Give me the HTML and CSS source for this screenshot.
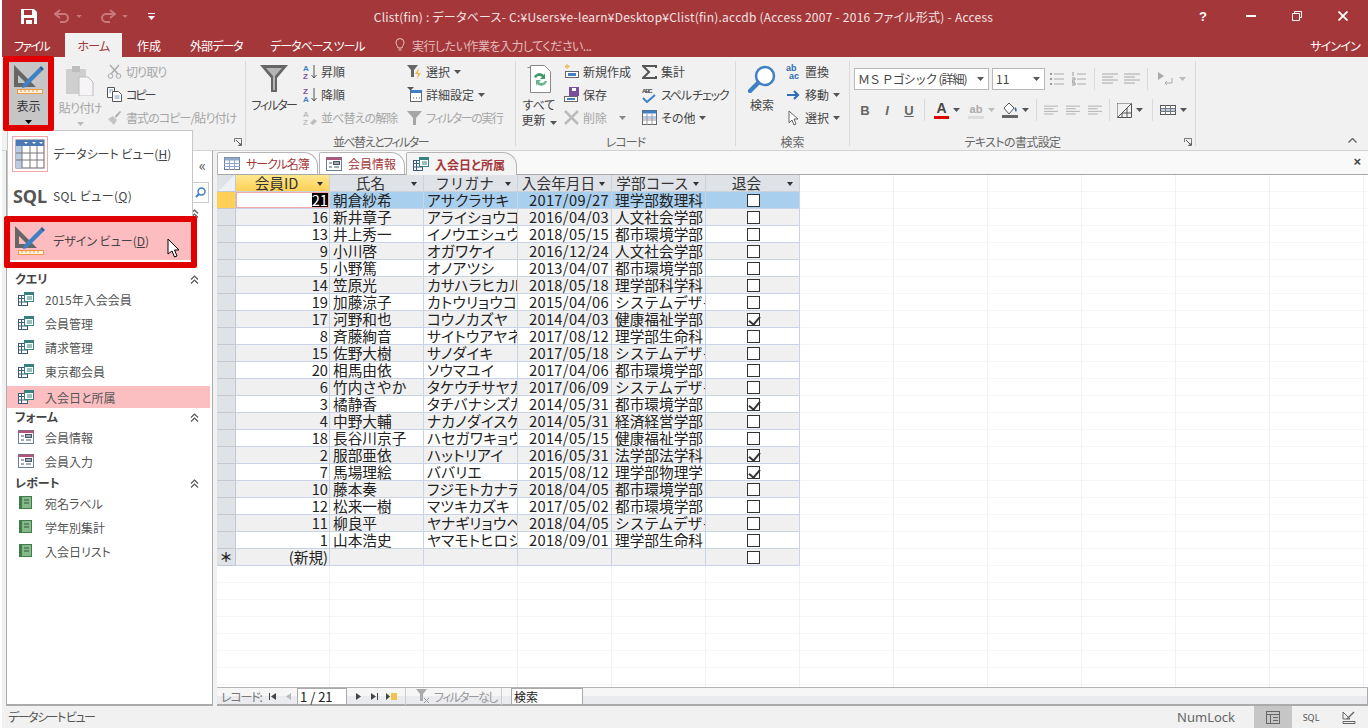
FILE: index.html
```html
<!DOCTYPE html>
<html lang="ja">
<head>
    <meta charset="UTF-8">
    <meta name="viewport" content="width=device-width, initial-scale=1.0">
    <title>Clist(fin) - Access</title>
    <link rel="stylesheet" href="styles.css">
</head>
<body>
    <svg class="defs" width="0" height="0">
        <symbol id="i-design" viewBox="0 0 30 30">
            <path d="M0 1 L0 23 L22 23 Z M4 11 L4 19 L12 19 Z" fill="#666" fill-rule="evenodd"/>
            <path d="M9 20 L25 4 L28 7 L12 23 L8 24 Z" fill="#3f7fc4"/>
            <path d="M25 4 L27 2 L30 5 L28 7 Z" fill="#2c5f9a"/>
            <rect x="3.5" y="25.5" width="25" height="4" fill="#fff3e0" stroke="#ed9a45"/>
            <path d="M7 26v2M11 26v2M15 26v2M19 26v2M23 26v2" stroke="#ed9a45"/>
        </symbol>
        <symbol id="i-sheet" viewBox="0 0 30 30">
            <rect x="1" y="1" width="28" height="28" fill="#fff" stroke="#666"/>
            <rect x="1" y="1" width="28" height="6" fill="#4a79b5"/>
            <rect x="1" y="7" width="6" height="22" fill="#b8cbe4"/>
            <path d="M1 14h28M1 21h28M7 7v22M15 7v22M22 7v22" stroke="#777" fill="none"/>
            <path d="M9 3h4l-2 2zM17 3h4l-2 2zM24 3h4l-2 2z" fill="#fff"/>
        </symbol>
        <symbol id="i-query" viewBox="0 0 16 14">
            <rect x="0.5" y="3.5" width="9" height="10" fill="#fff" stroke="#3c5a78"/>
            <path d="M0 6.5h10M0 10h10M3.5 4v9" stroke="#3c5a78"/>
            <rect x="6.5" y="0.5" width="9" height="9" fill="#fff" stroke="#37827f"/>
            <rect x="6.5" y="0.5" width="9" height="2.5" fill="#37827f"/>
            <path d="M9 5h5M9 7h5" stroke="#37827f"/>
        </symbol>
        <symbol id="i-form" viewBox="0 0 16 14">
            <rect x="0.5" y="0.5" width="15" height="13" fill="#fff" stroke="#6b7c93"/>
            <rect x="0.5" y="0.5" width="15" height="2.5" fill="#b2537a"/>
            <path d="M3 6h3M3 10h3M8 6h5M8 10h5" stroke="#44546a"/>
            <rect x="7.5" y="4.5" width="6" height="3" fill="none" stroke="#44546a"/>
        </symbol>
        <symbol id="i-report" viewBox="0 0 14 14">
            <rect x="0" y="0" width="13" height="13" fill="#3f7f47"/>
            <rect x="3" y="1" width="9" height="11" fill="#86b98a"/>
            <path d="M5 4h5M5 7h5" stroke="#2d5f33"/>
        </symbol>
        <symbol id="i-caret" viewBox="0 0 7 4"><path d="M0 0h7L3.5 4z"/></symbol>
        <symbol id="i-chev" viewBox="0 0 9 9"><path d="M1 4.500l3.500-3.500 3.500 3.500M1 8.500l3.500-3.500 3.500 3.500" fill="none" stroke="#555" stroke-width="1.200"/></symbol>
        <symbol id="i-lines" viewBox="0 0 16 12">
            <path d="M0 1h16M0 4h11M0 7h16M0 10h11" stroke="#a8a8a8" fill="none"/>
        </symbol>
    </svg>

    <div class="app">
        <header class="titlebar">
            <div class="qat">
                <svg class="qat-save" width="16" height="15" viewBox="0 0 16 15"><path d="M0 0h13l3 3v12H0z" fill="#fff"/><rect x="3" y="1" width="8" height="5" fill="#a4373a"/><rect x="3" y="9" width="10" height="6" fill="#a4373a"/><rect x="5" y="11" width="6" height="4" fill="#fff"/></svg>
                <svg class="qat-undo" width="16" height="14" viewBox="0 0 16 14"><path d="M6 1L1 5l5 4M1 5h9a4 4 0 0 1 0 8H6" fill="none" stroke="#c9797b" stroke-width="2"/></svg>
                <svg class="qat-caret" width="6" height="3"><use href="#i-caret" fill="#c9797b"/></svg>
                <svg class="qat-redo" width="16" height="14" viewBox="0 0 16 14"><path d="M10 1l5 4-5 4M15 5H6a4 4 0 0 0 0 8h4" fill="none" stroke="#c9797b" stroke-width="2"/></svg>
                <svg class="qat-caret" width="6" height="3"><use href="#i-caret" fill="#c9797b"/></svg>
                <svg class="qat-more" width="7" height="7" viewBox="0 0 7 7"><path d="M0 0.5h7" stroke="#fff"/><path d="M0 3h7L3.5 7z" fill="#fff"/></svg>
            </div>
            <div class="doc-title">Clist(fin) : データベース- C:¥Users¥e-learn¥Desktop¥Clist(fin).accdb (Access 2007 - 2016 ファイル形式) - Access</div>
            <div class="win-btns">
                <span class="win-help">?</span>
                <svg class="win-min" width="10" height="2"><rect width="10" height="2" fill="#fff"/></svg>
                <svg class="win-max" width="10" height="10" viewBox="0 0 10 10"><path d="M2.5 2.5V.5h7v6h-2M.5 2.5h7v7h-7z" fill="none" stroke="#fff"/></svg>
                <svg class="win-close" width="10" height="10" viewBox="0 0 10 10"><path d="M.5.5l9 9M9.500.5l-9 9" stroke="#fff" stroke-width="1.800"/></svg>
            </div>
        </header>

        <nav class="tabbar">
            <span class="rtab file">ファイル</span>
            <span class="rtab home">ホーム</span>
            <span class="rtab create">作成</span>
            <span class="rtab ext">外部データ</span>
            <span class="rtab dbtool">データベース ツール</span>
            <span class="tell">
                <svg width="10" height="14" viewBox="0 0 10 14"><path d="M3 10C3 8 1 7 1 4.500a4 4 0 0 1 8 0C9 7 7 8 7 10zM3.500 12h3" fill="none" stroke="#e6c3c4"/></svg>
                実行したい作業を入力してください...
            </span>
            <span class="signin">サインイン</span>
        </nav>

        <section class="ribbon">
            <div class="group g-view">
                <div class="group-body">
                    <div class="big view-btn">
                        <svg width="30" height="30"><use href="#i-design"/></svg>
                        <span class="big-text">表示</span>
                        <svg class="big-caret" width="7" height="4"><use href="#i-caret"/></svg>
                    </div>
                </div>
            </div>

            <div class="group g-clip">
                <div class="group-body">
                    <div class="big off paste">
                        <svg width="30" height="31" viewBox="0 0 30 31"><rect x="1" y="4" width="20" height="25" rx="1" fill="#cfcfcf"/><rect x="7" y="1" width="8" height="6" fill="#bdbdbd"/><path d="M14 12h9l5 5v14H14z" fill="#f7f4f7" stroke="#bdbdbd"/></svg>
                        <span class="big-text">貼り付け</span>
                        <svg class="big-caret" width="7" height="4"><use href="#i-caret" fill="#bbb"/></svg>
                    </div>
                    <div class="col">
                        <div class="cmd off tight-1"><svg width="15" height="15" viewBox="0 0 15 15"><path d="M3 1l8 9M12 1L4 10" stroke="#aaa" stroke-width="1.500"/><circle cx="3.500" cy="12" r="2.300" fill="none" stroke="#aaa"/><circle cx="11.500" cy="12" r="2.300" fill="none" stroke="#aaa"/></svg>切り取り</div>
                        <div class="cmd tight-2"><svg width="15" height="15" viewBox="0 0 15 15"><path d="M.5.5h7v10h-7z" fill="#fff" stroke="#555"/><path d="M5.500 4.500h6l3 3v7h-9z" fill="#fff" stroke="#555"/><path d="M2 3h4M2 5h2M7.500 9h5M7.500 11h5" stroke="#7a9cc6"/></svg>コピー</div>
                        <div class="cmd off tight-1"><svg width="15" height="15" viewBox="0 0 15 15"><path d="M1 9l5-3 4 4-3 5z" fill="#c4c4c4"/><path d="M8 6l5-5 1 1-5 6z" fill="#aaa"/></svg>書式のコピー/貼り付け</div>
                    </div>
                </div>
                <div class="group-label"><svg class="launcher" width="8" height="8" viewBox="0 0 8 8"><path d="M.5 4V.5H7.500V7.500H4" fill="none" stroke="#777"/><path d="M2 2l5 5M5 7h2V5" fill="none" stroke="#555"/></svg></div>
            </div>

            <div class="group g-sort">
                <div class="group-body">
                    <div class="big filter">
                        <svg width="28" height="28" viewBox="0 0 28 28"><path d="M0 0h28L17 13v14h-6V13z" fill="#666"/><path d="M6 3h16l-7 8v14h-2V11z" fill="#b5b5b5"/></svg>
                        <span class="big-text tight-15">フィルター</span>
                    </div>
                    <div class="col col-sort">
                        <div class="cmd"><svg class="az" width="14" height="16" viewBox="0 0 14 16"><text x="0" y="7" class="az-a">A</text><text x="0" y="15" class="az-z">Z</text><path d="M11 1v13M8.500 11l2.500 3 2.500-3" fill="none" stroke="#555"/></svg>昇順</div>
                        <div class="cmd"><svg class="az" width="14" height="16" viewBox="0 0 14 16"><text x="0" y="7" class="az-z">Z</text><text x="0" y="15" class="az-a">A</text><path d="M11 1v13M8.500 11l2.500 3 2.500-3" fill="none" stroke="#555"/></svg>降順</div>
                        <div class="cmd off tight-1"><svg class="az" width="14" height="16" viewBox="0 0 14 16"><text x="0" y="7" class="az-off">A</text><text x="0" y="15" class="az-off">Z</text><path d="M7 13l4-4 3 2-4 4z" fill="#bbb"/></svg>並べ替えの解除</div>
                    </div>
                    <div class="col col-filter">
                        <div class="cmd"><svg width="15" height="15" viewBox="0 0 15 15"><path d="M0 1h11L7 6v7H4V6z" fill="#666"/><path d="M12 4L8 10h3l-1 5 4-6h-3z" fill="#f2b84b"/></svg>選択<svg class="caret" width="7" height="4"><use href="#i-caret"/></svg></div>
                        <div class="cmd"><svg width="15" height="15" viewBox="0 0 15 15"><path d="M0 0h7L4 3v4H3V3z" fill="#555"/><rect x="3.500" y="3.500" width="11" height="11" fill="#fff" stroke="#666"/><rect x="3.500" y="3" width="11" height="3" fill="#3f7fc4"/><path d="M6 11h1M9 11h1M12 11h1" stroke="#555"/></svg>詳細設定<svg class="caret" width="7" height="4"><use href="#i-caret"/></svg></div>
                        <div class="cmd off tight-15"><svg width="15" height="15" viewBox="0 0 15 15"><path d="M0 1h15L9 8v7H6V8z" fill="#a6a6a6"/></svg>フィルターの実行</div>
                    </div>
                </div>
                <div class="group-label tight-15">並べ替えとフィルター</div>
            </div>

            <div class="group g-rec">
                <div class="group-body">
                    <div class="big refresh">
                        <svg width="26" height="30" viewBox="0 0 26 30"><path d="M1.500 3.500h3" stroke="#888"/><path d="M4.500 1.500h14l6 6v21h-20z" fill="#fff" stroke="#888"/><path d="M8 13a6 6 0 0 1 10-2l1-2v6h-5l2-2a4 4 0 0 0-6 1z" fill="#3f9a6a"/><path d="M21 17a6 6 0 0 1-10 3l-1 2v-6h5l-2 2a4 4 0 0 0 6-1z" fill="#6ab58e"/></svg>
                        <span class="big-text">すべて<br>更新<svg class="caret" width="7" height="4"><use href="#i-caret"/></svg></span>
                    </div>
                    <div class="col col-rec1">
                        <div class="cmd"><svg width="15" height="15" viewBox="0 0 15 15"><path d="M3 0v5M1 2.500h5M1.500 1l3 3M4.500 1l-3 3" stroke="#efb75a"/><rect x="1.500" y="7.500" width="13" height="6" fill="#fff" stroke="#666"/><rect x="4" y="9" width="8" height="3" fill="#3f7fc4"/></svg>新規作成</div>
                        <div class="cmd"><svg width="15" height="15" viewBox="0 0 15 15"><path d="M5 0h10v9H5z" fill="#7a4f9f"/><rect x="8" y="1" width="4" height="3" fill="#fff"/><rect x=".5" y="9.500" width="13" height="5" fill="#fff" stroke="#666"/><rect x="3" y="11" width="8" height="2" fill="#3f7fc4"/></svg>保存</div>
                        <div class="cmd off"><svg width="15" height="15" viewBox="0 0 15 15"><path d="M1 1l13 13M14 1L1 14" stroke="#bbb" stroke-width="2.500"/></svg>削除<svg class="caret gap" width="7" height="4"><use href="#i-caret" fill="#888"/></svg></div>
                    </div>
                    <div class="col col-rec2">
                        <div class="cmd"><svg width="15" height="14" viewBox="0 0 15 14"><path d="M14 3V1H1l6 6-6 6h13v-2" fill="none" stroke="#555" stroke-width="2"/></svg>集計</div>
                        <div class="cmd tight-spell"><svg width="15" height="16" viewBox="0 0 15 16"><text x="0" y="6" class="abc">ABC</text><path d="M1 11l4 4 8-7" fill="none" stroke="#3f7fc4" stroke-width="2"/></svg>スペル チェック</div>
                        <div class="cmd"><svg width="15" height="15" viewBox="0 0 15 15"><rect x=".5" y=".5" width="14" height="14" fill="#fff" stroke="#666"/><rect x=".5" y=".5" width="14" height="3" fill="#3f7fc4"/><rect x="1" y="6" width="13" height="3" fill="#b8cbe4"/><path d="M.5 10h14M5 4v11M10 4v11" stroke="#999" fill="none"/></svg>その他<svg class="caret" width="7" height="4"><use href="#i-caret"/></svg></div>
                    </div>
                </div>
                <div class="group-label tight-1">レコード</div>
            </div>

            <div class="group g-find">
                <div class="group-body">
                    <div class="big find">
                        <svg width="28" height="28" viewBox="0 0 28 28"><circle cx="17" cy="11" r="9" fill="#fff" stroke="#3f7fc4" stroke-width="2.500"/><path d="M10 18L2 26" stroke="#3f7fc4" stroke-width="4.500" stroke-linecap="round"/></svg>
                        <span class="big-text">検索</span>
                    </div>
                    <div class="col col-find">
                        <div class="cmd"><svg width="15" height="16" viewBox="0 0 15 16"><text x="0" y="7" class="ab">ab</text><text x="3" y="15" class="ab">ac</text></svg>置換</div>
                        <div class="cmd"><svg width="15" height="12" viewBox="0 0 15 12"><path d="M1 6h11M8 2l4 4-4 4" fill="none" stroke="#2f6fb5" stroke-width="2.200"/></svg>移動<svg class="caret" width="7" height="4"><use href="#i-caret"/></svg></div>
                        <div class="cmd"><svg width="15" height="16" viewBox="0 0 15 16"><path d="M3 1v12l3-3 2 5 2-1-2-5h4z" fill="#fff" stroke="#666"/></svg>選択<svg class="caret" width="7" height="4"><use href="#i-caret"/></svg></div>
                    </div>
                </div>
                <div class="group-label">検索</div>
            </div>

            <div class="group g-text">
                <div class="group-body text-body">
                    <div class="text-row">
                        <div class="combo font-combo"><span class="font-name">ＭＳ Ｐゴシック (詳細)</span><svg class="caret" width="7" height="4"><use href="#i-caret"/></svg></div>
                        <div class="combo size-combo">11<svg class="caret" width="7" height="4"><use href="#i-caret"/></svg></div>
                        <svg class="t-ico list1" width="14" height="14" viewBox="0 0 14 14"><path d="M4 2h10M4 7h10M4 12h10" stroke="#aaa"/><path d="M0 2h2M0 7h2M0 12h2" stroke="#999" stroke-width="2"/></svg>
                        <svg class="t-ico list2" width="14" height="14" viewBox="0 0 14 14"><path d="M5 2h9M5 7h9M5 12h9" stroke="#aaa"/><path d="M1 0v4M0 6h3v2H0v2h3M0 11h3v2H0" stroke="#999" fill="none"/></svg>
                        <i class="sep sep1"></i>
                        <svg class="t-ico ind1" width="16" height="12"><use href="#i-lines"/></svg>
                        <svg class="t-ico ind2" width="16" height="12"><use href="#i-lines"/></svg>
                        <i class="sep sep2"></i>
                        <svg class="t-ico rtl" width="15" height="14" viewBox="0 0 15 14"><path d="M0 0l6 4-6 4z" fill="#aaa"/><path d="M14 6v5H7M9 9l-2 2 2 2" fill="none" stroke="#aaa"/></svg>
                        <svg class="caret rtl-caret" width="7" height="4"><use href="#i-caret" fill="#bbb"/></svg>
                    </div>
                    <div class="text-row row2">
                        <b class="fmt">B</b><i class="fmt">I</i><u class="fmt">U</u>
                        <i class="sep sep3"></i>
                        <span class="font-color">A</span><svg class="caret" width="7" height="4"><use href="#i-caret"/></svg>
                        <span class="hilite">ab</span><svg class="caret" width="7" height="4"><use href="#i-caret" fill="#bbb"/></svg>
                        <svg class="t-ico fill-ico" width="16" height="16" viewBox="0 0 16 16"><path d="M2 6l5-5 5 5-5 6z" fill="#fff" stroke="#555"/><path d="M13 5c2 1 2 4 1 5-1-1-2-3-1-5z" fill="#2f6fb5"/><rect y="13" width="16" height="3" fill="#666"/></svg><svg class="caret" width="7" height="4"><use href="#i-caret"/></svg>
                        <i class="sep sep4"></i>
                        <svg class="t-ico al1" width="14" height="11"><use href="#i-lines"/></svg>
                        <svg class="t-ico al2" width="14" height="11"><use href="#i-lines"/></svg>
                        <svg class="t-ico al3" width="14" height="11"><use href="#i-lines"/></svg>
                        <i class="sep sep5"></i>
                        <svg class="t-ico grid-ico" width="15" height="15" viewBox="0 0 15 15"><path d="M.5.5h14" stroke="#555" stroke-dasharray="1 1"/><path d="M.5.5v14" stroke="#555" stroke-dasharray="1 1"/><path d="M.5 14.500L14.500.500V14.500zM5 10v5M10 5v10M5 10h10" fill="none" stroke="#555"/></svg><svg class="caret" width="7" height="4"><use href="#i-caret"/></svg>
                        <i class="sep sep6"></i>
                        <svg class="t-ico tbl-ico" width="16" height="10" viewBox="0 0 16 10"><rect x=".5" y=".5" width="15" height="9" fill="#fff" stroke="#555"/><rect x="1" y="4" width="14" height="2" fill="#b8cbe4"/><path d="M5.500 0v10M10.500 0v10M0 3.500h16M0 6.500h16" stroke="#777"/></svg><svg class="caret" width="7" height="4"><use href="#i-caret"/></svg>
                    </div>
                </div>
                <div class="group-label text-label">テキストの書式設定<svg class="launcher" width="8" height="8" viewBox="0 0 8 8"><path d="M.5 4V.5H7.500V7.500H4" fill="none" stroke="#777"/><path d="M2 2l5 5M5 7h2V5" fill="none" stroke="#555"/></svg></div>
            </div>

            <svg class="collapse" width="9" height="5" viewBox="0 0 9 5"><path d="M.5 4.500l4-4 4 4" fill="none" stroke="#666" stroke-width="1.400"/></svg>
        </section>

        <main class="workspace">
            <aside class="nav-pane">
                <div class="nav-head"><span class="shutter">«</span></div>
                <div class="nav-search">
                    <svg width="11" height="11" viewBox="0 0 11 11"><circle cx="6.500" cy="4.500" r="3.500" fill="none" stroke="#3f7fc4" stroke-width="1.500"/><path d="M4 7L1 10" stroke="#3f7fc4" stroke-width="2"/></svg>
                </div>
                <div class="nav-heading nav-hidden"><span>テーブル</span><svg width="9" height="9"><use href="#i-chev"/></svg></div>
                <div class="nav-heading"><span>クエリ</span><svg width="9" height="9"><use href="#i-chev"/></svg></div>
                <div class="nav-item"><svg width="16" height="14"><use href="#i-query"/></svg>2015年入会会員</div>
                <div class="nav-item"><svg width="16" height="14"><use href="#i-query"/></svg>会員管理</div>
                <div class="nav-item"><svg width="16" height="14"><use href="#i-query"/></svg>請求管理</div>
                <div class="nav-item"><svg width="16" height="14"><use href="#i-query"/></svg>東京都会員</div>
                <div class="nav-item current"><svg width="16" height="14"><use href="#i-query"/></svg>入会日と所属</div>
                <div class="nav-heading"><span>フォーム</span><svg width="9" height="9"><use href="#i-chev"/></svg></div>
                <div class="nav-item"><svg width="16" height="14"><use href="#i-form"/></svg>会員情報</div>
                <div class="nav-item"><svg width="16" height="14"><use href="#i-form"/></svg>会員入力</div>
                <div class="nav-heading"><span>レポート</span><svg width="9" height="9"><use href="#i-chev"/></svg></div>
                <div class="nav-item"><svg width="16" height="14"><use href="#i-report"/></svg>宛名ラベル</div>
                <div class="nav-item"><svg width="16" height="14"><use href="#i-report"/></svg>学年別集計</div>
                <div class="nav-item"><svg width="16" height="14"><use href="#i-report"/></svg>入会日リスト</div>
            </aside>

            <div class="doc">
                <div class="doc-tabs">
                    <span class="dtab"><svg width="16" height="13" viewBox="0 0 16 13"><rect x=".5" y=".5" width="15" height="12" fill="#fff" stroke="#6b7c93"/><rect x=".5" y=".5" width="15" height="3" fill="#8fa7c8"/><path d="M0 6.500h16M0 9.500h16M5.500 3v10M10.500 3v10" stroke="#8fa7c8"/></svg>サークル名簿</span>
                    <span class="dtab"><svg width="16" height="14"><use href="#i-form"/></svg>会員情報</span>
                    <span class="dtab active"><svg width="16" height="14"><use href="#i-query"/></svg>入会日と所属</span>
                    <span class="doc-close">×</span>
                </div>
                <div class="sheet">
                    <table class="grid">
                        <thead>
                            <tr><th class="sel corner"></th><th class="cur">会員ID<i class="drop"></i></th><th>氏名<i class="drop"></i></th><th>フリガナ<i class="drop"></i></th><th>入会年月日<i class="drop"></i></th><th>学部コース<i class="drop"></i></th><th>退会<i class="drop"></i></th></tr>
                        </thead>
                        <tbody>
                            <tr class="picked"><td class="sel hot"></td><td class="num focus"><span class="inv">21</span></td><td>朝倉紗希</td><td class="kana">アサクラサキ</td><td class="date">2017/09/27</td><td>理学部数理科</td><td class="chk"><span class="box"></span></td></tr>
                            <tr><td class="sel"></td><td class="num">16</td><td>新井章子</td><td class="kana">アライショウコ</td><td class="date">2016/04/03</td><td>人文社会学部</td><td class="chk"><span class="box"></span></td></tr>
                            <tr><td class="sel"></td><td class="num">13</td><td>井上秀一</td><td class="kana">イノウエシュウ</td><td class="date">2018/05/15</td><td>都市環境学部</td><td class="chk"><span class="box"></span></td></tr>
                            <tr><td class="sel"></td><td class="num">9</td><td>小川啓</td><td class="kana">オガワケイ</td><td class="date">2016/12/24</td><td>人文社会学部</td><td class="chk"><span class="box"></span></td></tr>
                            <tr><td class="sel"></td><td class="num">5</td><td>小野篤</td><td class="kana">オノアツシ</td><td class="date">2013/04/07</td><td>都市環境学部</td><td class="chk"><span class="box"></span></td></tr>
                            <tr><td class="sel"></td><td class="num">14</td><td>笠原光</td><td class="kana">カサハラヒカル</td><td class="date">2018/05/18</td><td>理学部科学科</td><td class="chk"><span class="box"></span></td></tr>
                            <tr><td class="sel"></td><td class="num">19</td><td>加藤涼子</td><td class="kana">カトウリョウコ</td><td class="date">2015/04/06</td><td>システムデザイン</td><td class="chk"><span class="box"></span></td></tr>
                            <tr><td class="sel"></td><td class="num">17</td><td>河野和也</td><td class="kana">コウノカズヤ</td><td class="date">2014/04/03</td><td>健康福祉学部</td><td class="chk"><span class="box on"></span></td></tr>
                            <tr><td class="sel"></td><td class="num">8</td><td>斉藤絢音</td><td class="kana">サイトウアヤネ</td><td class="date">2017/08/12</td><td>理学部生命科</td><td class="chk"><span class="box"></span></td></tr>
                            <tr><td class="sel"></td><td class="num">15</td><td>佐野大樹</td><td class="kana">サノダイキ</td><td class="date">2017/05/18</td><td>システムデザイン</td><td class="chk"><span class="box"></span></td></tr>
                            <tr><td class="sel"></td><td class="num">20</td><td>相馬由依</td><td class="kana">ソウマユイ</td><td class="date">2017/04/06</td><td>都市環境学部</td><td class="chk"><span class="box"></span></td></tr>
                            <tr><td class="sel"></td><td class="num">6</td><td>竹内さやか</td><td class="kana">タケウチサヤカ</td><td class="date">2017/06/09</td><td>システムデザイン</td><td class="chk"><span class="box"></span></td></tr>
                            <tr><td class="sel"></td><td class="num">3</td><td>橘静香</td><td class="kana">タチバナシズカ</td><td class="date">2014/05/31</td><td>都市環境学部</td><td class="chk"><span class="box on"></span></td></tr>
                            <tr><td class="sel"></td><td class="num">4</td><td>中野大輔</td><td class="kana">ナカノダイスケ</td><td class="date">2014/05/31</td><td>経済経営学部</td><td class="chk"><span class="box"></span></td></tr>
                            <tr><td class="sel"></td><td class="num">18</td><td>長谷川京子</td><td class="kana">ハセガワキョウ</td><td class="date">2014/05/15</td><td>健康福祉学部</td><td class="chk"><span class="box"></span></td></tr>
                            <tr><td class="sel"></td><td class="num">2</td><td>服部亜依</td><td class="kana">ハットリアイ</td><td class="date">2016/05/31</td><td>法学部法学科</td><td class="chk"><span class="box on"></span></td></tr>
                            <tr><td class="sel"></td><td class="num">7</td><td>馬場理絵</td><td class="kana">ババリエ</td><td class="date">2015/08/12</td><td>理学部物理学</td><td class="chk"><span class="box on"></span></td></tr>
                            <tr><td class="sel"></td><td class="num">10</td><td>藤本奏</td><td class="kana">フジモトカナデ</td><td class="date">2018/04/05</td><td>都市環境学部</td><td class="chk"><span class="box"></span></td></tr>
                            <tr><td class="sel"></td><td class="num">12</td><td>松来一樹</td><td class="kana">マツキカズキ</td><td class="date">2017/05/02</td><td>都市環境学部</td><td class="chk"><span class="box"></span></td></tr>
                            <tr><td class="sel"></td><td class="num">11</td><td>柳良平</td><td class="kana">ヤナギリョウヘイ</td><td class="date">2018/04/05</td><td>システムデザイン</td><td class="chk"><span class="box"></span></td></tr>
                            <tr><td class="sel"></td><td class="num">1</td><td>山本浩史</td><td class="kana">ヤマモトヒロシ</td><td class="date">2018/09/01</td><td>理学部生命科</td><td class="chk"><span class="box"></span></td></tr>
                            <tr class="new"><td class="sel">＊</td><td class="num">(新規)</td><td></td><td></td><td></td><td></td><td class="chk"><span class="box"></span></td></tr>
                        </tbody>
                    </table>
                </div>
                <div class="rec-bar">
                    <span class="rec-label">レコード:</span>
                    <svg class="rec-ico first" width="7" height="7" viewBox="0 0 7 7"><path d="M0 0h1v7H0zM7 0v7L2 3.500z" fill="#444"/></svg>
                    <svg class="rec-ico prev" width="5" height="7" viewBox="0 0 5 7"><path d="M5 0v7L0 3.500z" fill="#bbb"/></svg>
                    <span class="rec-pos">1 / 21</span>
                    <svg class="rec-ico nxt" width="5" height="7" viewBox="0 0 5 7"><path d="M0 0v7l5-3.500z" fill="#444"/></svg>
                    <svg class="rec-ico" width="7" height="7" viewBox="0 0 7 7"><path d="M6 0h1v7H6zM0 0v7l5-3.500z" fill="#444"/></svg>
                    <svg class="rec-ico" width="11" height="7" viewBox="0 0 11 7"><path d="M0 0v7l4-3.500z" fill="#444"/><rect x="5" width="6" height="7" fill="#f2c14e"/></svg>
                    <span class="rec-filter"><svg width="15" height="14" viewBox="0 0 15 14"><path d="M0 0h11L7 5v7H4V5z" fill="#aaa"/><path d="M8 9l5 5M13 9l-5 5" stroke="#999"/></svg>フィルターなし</span>
                    <span class="rec-search">検索</span>
                    <span class="rec-fill"></span>
                </div>
            </div>
        </main>

        <footer class="status">
            <span class="status-text">データシート ビュー</span>
            <span class="numlock">NumLock</span>
            <span class="vbtn on"><svg width="14" height="13" viewBox="0 0 14 13"><rect x=".5" y=".5" width="13" height="12" fill="none" stroke="#666"/><path d="M0 3.500h14M4.500 3v10M7 6.500h5M7 9.500h5" stroke="#666"/></svg></span>
            <span class="vbtn sql">SQL</span>
            <span class="vbtn"><svg width="14" height="13" viewBox="0 0 14 13"><path d="M1 1v7h7zM1 10.500h12v2H1z" fill="none" stroke="#666"/><path d="M5 8l7-7" stroke="#666" stroke-width="1.500"/></svg></span>
        </footer>
    </div>

    <!-- ドロップダウン -->
    <div class="view-menu">
        <div class="vm-item">
            <span class="vm-icon picked-icon"><svg width="30" height="30"><use href="#i-sheet"/></svg></span>
            <span>データシート ビュー(<u>H</u>)</span>
        </div>
        <div class="vm-item">
            <span class="vm-icon sql-big">SQL</span>
            <span class="vm-sql">SQL ビュー(<u>Q</u>)</span>
        </div>
        <div class="vm-item hover">
            <span class="vm-icon"><svg width="30" height="30"><use href="#i-design"/></svg></span>
            <span>デザイン ビュー(<u>D</u>)</span>
        </div>
    </div>

    <!-- 赤枠の注釈 -->
    <div class="mark mark-view"></div>
    <div class="mark mark-design"></div>
    <svg class="pointer" width="13" height="20" viewBox="0 0 13 20"><path d="M1 1v15l4-3 2.500 6 2.500-1-2.500-6H12z" fill="#fff" stroke="#000"/></svg>
</body>
</html>
```

FILE: styles.css
```css
* {
    box-sizing: border-box;
}
html, body {
    margin: 0;
    height: 728px;
    overflow: hidden;
    background: #fff;
}
body {
    position: relative;
    font-family: "Noto Sans CJK JP", "Noto Sans", sans-serif;
    font-size: 12px;
    font-feature-settings: "palt";
    color: #444;
}
.defs {
    position: absolute;
}
.app {
    margin-left: 2px;
    height: 728px;
    display: flex;
    flex-direction: column;
    background: #f1f1f1;
}
.tight-1 { letter-spacing: -0.9px; }
.tight-2 { letter-spacing: -2px; }
.tight-15 { letter-spacing: -1.5px; }
.tight-spell { letter-spacing: -1.2px; }

/* title bar */
.titlebar {
    height: 32px;
    background: #a4373a;
    color: #f3e3e3;
    display: grid;
    grid-template-columns: 1fr auto 1fr;
    align-items: center;
    padding-right: 3px;
}
.qat {
    display: flex;
    align-items: center;
}
.qat-save { margin-left: 19px; }
.qat-undo { margin-left: 17px; }
.qat-caret { margin-left: 6px; }
.qat-redo { margin-left: 18px; }
.qat-more { margin-left: 20px; }
.doc-title {
    font-size: 12px;
    letter-spacing: 0.24px;
    white-space: nowrap;
}
.win-btns {
    display: flex;
    align-items: center;
    justify-content: flex-end;
    color: #fff;
}
.win-help {
    font-family: "Liberation Sans", sans-serif;
    font-weight: bold;
    font-size: 13px;
    margin-right: 39px;
}
.win-min { margin-right: 36px; }
.win-max { margin-right: 36px; }
.win-close { margin-right: 17px; }

/* ribbon tabs */
.tabbar {
    height: 25px;
    background: #a4373a;
    color: #fff;
    display: flex;
    align-items: flex-end;
    white-space: nowrap;
}
.rtab {
    height: 24px;
    line-height: 25px;
    padding: 0 14px;
}
.rtab.file { padding: 0 0 0 12px; width: 63px; letter-spacing: -1.7px; }
.rtab.home {
    background: #f1f1f1;
    color: #a4373a;
    width: 57px;
    text-align: center;
    padding: 0;
    letter-spacing: -0.8px;
}
.rtab.create { margin-left: 15px; padding: 0; width: 38px; }
.rtab.ext { margin-left: 15px; padding: 0; width: 80px; letter-spacing: -1px; }
.rtab.dbtool { padding: 0; width: 125px; letter-spacing: -1px; }
.tell {
    height: 24px;
    line-height: 25px;
    color: #e3bcbd;
    display: flex;
    align-items: center;
    gap: 7px;
    letter-spacing: -0.5px;
}
.signin {
    margin-left: auto;
    margin-right: 8px;
    height: 24px;
    line-height: 25px;
    letter-spacing: -0.8px;
}

/* ribbon */
.ribbon {
    height: 93px;
    display: flex;
    position: relative;
    background: #f1f1f1;
    white-space: nowrap;
}
.group {
    display: flex;
    flex-direction: column;
    border-right: 1px solid #dadada;
    margin-top: 4px;
    margin-bottom: 4px;
}
.group-body {
    height: 71px;
    display: flex;
}
.group-label {
    height: 14px;
    line-height: 20px;
    text-align: center;
    color: #666;
    position: relative;
}
.text-label {
    padding-right: 20px;
    letter-spacing: -0.6px;
}
.launcher {
    position: absolute;
    right: 3px;
    bottom: 0;
}
.g-view { width: 54px; border: 0; }
.g-clip { width: 190px; }
.g-sort { width: 270px; }
.g-rec { width: 220px; }
.g-find { width: 114px; }
.g-text { width: 346px; }

.big {
    display: flex;
    flex-direction: column;
    align-items: center;
    text-align: center;
    line-height: 15px;
}
.big.off { color: #a6a6a6; }
.big-text { margin-top: 4px; }
.big-caret { margin-top: 7px; }
.view-btn {
    width: 39px;
    height: 64px;
    margin: 1px 0 0 7px;
    padding-top: 2px;
    background: #c6c6c6;
    color: #333;
}
.view-btn .big-text { margin-top: 4px; }
.paste { width: 42px; margin-left: 3px; padding-top: 4px; letter-spacing: -0.8px; }
.filter { width: 46px; margin-left: 5px; padding-top: 4px; }
.refresh { width: 36px; margin-left: 5px; padding-top: 3px; }
.refresh .big-text { margin-top: 3px; }
.find { width: 42px; margin-left: 5px; padding-top: 4px; }

.col {
    display: flex;
    flex-direction: column;
    margin-top: -1px;
}
.cmd {
    height: 23px;
    display: flex;
    align-items: center;
    gap: 4px;
    color: #444;
}
.cmd.off { color: #a6a6a6; }
.caret {
    fill: #555;
    margin-left: 4px;
    flex: none;
}
.cmd .caret { margin-left: 0; }
.cmd .caret.gap { margin-left: 8px; }
.g-clip .col { margin-left: 6px; }
.col-sort { margin-left: 6px; width: 103px; }
.col-filter { margin-left: 1px; }
.col-rec1 { margin-left: 7px; width: 78px; }
.col-rec2 { margin-left: 0; }
.col-find { margin-left: 3px; }
.az text, .abc, .ab {
    font-family: "Liberation Sans", sans-serif;
    font-weight: bold;
}
.az-a { font-size: 8px; fill: #3f7fc4; }
.az-z { font-size: 8px; fill: #7a4f9f; }
.az-off { font-size: 8px; fill: #bbb; }
.abc { font-size: 6px; fill: #444; }
.ab { font-size: 9px; fill: #2f6fb5; }

/* text formatting group */
.text-body {
    flex-direction: column;
    padding-left: 4px;
}
.text-row {
    display: flex;
    align-items: center;
    height: 22px;
    margin-top: 7px;
}
.row2 {
    margin-top: 9px;
}
.combo {
    height: 22px;
    line-height: 20px;
    background: #fff;
    border: 1px solid #b8b8b8;
    display: flex;
    align-items: center;
    justify-content: space-between;
    padding: 0 4px 0 3px;
    margin-right: 3px;
    color: #444;
}
.font-combo { width: 135px; }
.font-name {
    font-feature-settings: normal;
    letter-spacing: -1px;
}
.size-combo { width: 53px; margin-right: 5px; }
.sep {
    width: 1px;
    height: 22px;
    background: #dadada;
    display: block;
}
.list2 { margin-left: 8px; }
.sep1 { margin: 0 7px 0 8px; }
.ind2 { margin-left: 6px; }
.sep2 { margin: 0 10px 0 7px; }
.rtl-caret { margin-left: 6px; fill: #bbb; }
.fmt {
    width: 22px;
    text-align: center;
    font-family: "Liberation Sans", sans-serif;
    font-size: 13px;
    font-weight: bold;
    color: #666;
}
.sep3 { margin: 0 9px 0 4px; }
.font-color {
    width: 15px;
    text-align: center;
    font-family: "Liberation Sans", sans-serif;
    font-weight: bold;
    font-size: 14px;
    line-height: 15px;
    color: #444;
    border-bottom: 3px solid #e00000;
}
.hilite {
    width: 16px;
    margin-left: 8px;
    text-align: center;
    font-family: "Liberation Sans", sans-serif;
    font-weight: bold;
    font-size: 11px;
    line-height: 14px;
    color: #aaa;
    border-bottom: 3px solid #dcdcdc;
}
.fill-ico { margin-left: 7px; }
.sep4 { margin: 0 7px 0 7px; }
.al2, .al3 { margin-left: 8px; }
.sep5 { margin: 0 7px 0 7px; }
.sep6 { margin: 0 7px 0 9px; }
.collapse {
    position: absolute;
    right: 11px;
    bottom: 7px;
}

/* workspace */
.workspace {
    height: 556px;
    display: flex;
    border-top: 1px solid #d2d2d2;
}
.nav-pane {
    width: 207px;
    margin-left: 4px;
    background: #fff;
    border-right: 1px solid #ababab;
    border-left: 1px solid #ababab;
    border-bottom: 2px solid #ababab;
    display: flex;
    flex-direction: column;
}
.nav-head {
    height: 29px;
    text-align: right;
    padding-right: 6px;
    line-height: 28px;
}
.shutter {
    font-size: 15px;
    color: #555;
}
.nav-search {
    height: 21px;
    margin: 2px 3px 0 4px;
    border: 1px solid #ccc;
    display: flex;
    align-items: center;
    justify-content: flex-end;
    padding-right: 2px;
}
.nav-heading {
    height: 18px;
    line-height: 18px;
    display: flex;
    justify-content: space-between;
    align-items: center;
    padding: 0 13px 0 8px;
    font-weight: bold;
    color: #444;
    flex: none;
}
.nav-hidden {
    margin-top: 1px;
    margin-bottom: 48px;
}
.nav-item {
    height: 22px;
    margin: 0 2px 2px 0;
    padding-left: 11px;
    display: flex;
    align-items: center;
    gap: 11px;
    color: #555;
    flex: none;
}
.nav-item.current {
    background: #fcbfc1;
    margin: 2px 2px 0 0;
}

/* document area */
.doc {
    flex: 1;
    margin-left: 4px;
    display: flex;
    flex-direction: column;
    min-width: 0;
}
.doc-tabs {
    height: 24px;
    display: flex;
    align-items: flex-end;
    background: #f9f9f9;
    border-bottom: 1px solid #a8a8a8;
    white-space: nowrap;
    padding-top: 1px;
}
.dtab {
    height: 22px;
    display: flex;
    align-items: center;
    gap: 6px;
    padding: 0 0 0 6px;
    margin-right: 1px;
    color: #a4373a;
    background: #fff;
    border: 1px solid #b5b5b5;
    border-bottom: 0;
    border-radius: 2px 14px 0 0;
    width: 101px;
}
.dtab:first-child { letter-spacing: -1px; }
.dtab:nth-child(2) { width: 86px; }
.dtab.active {
    width: 111px;
    margin-right: 0;
    font-weight: bold;
    background: #f4f4f4;
    height: 23px;
    margin-bottom: -1px;
}
.doc-close {
    margin-left: auto;
    margin-right: 7px;
    align-self: flex-start;
    margin-top: 2px;
    font-family: "Liberation Sans", sans-serif;
    font-weight: bold;
    font-size: 13px;
    line-height: 15px;
    color: #444;
}
.sheet {
    flex: 1;
    background-color: #fff;
    background-image:
        repeating-linear-gradient(90deg, transparent 0 93px, #eef1f6 93px 94px),
        repeating-linear-gradient(180deg, transparent 0 16px, #f4f6fa 16px 17px);
    background-position: 19px 0, 0 0;
    overflow: hidden;
}
.grid {
    border-collapse: separate;
    border-spacing: 0;
    table-layout: fixed;
    width: 583px;
    font-size: 14.67px;
    font-feature-settings: normal;
    color: #222;
}
.grid th, .grid td {
    height: 17px;
    width: 94px;
    padding: 0 0 0 3px;
    border-right: 1px solid #c9d3e6;
    border-bottom: 1px solid #c9d3e6;
    line-height: 16px;
    overflow-x: clip;
    white-space: nowrap;
    font-weight: normal;
    text-align: left;
    background: #fff;
}
.grid tbody tr:nth-child(even) td {
    background: #f0f0f0;
}
.grid th {
    position: relative;
    background: #dfe3e8;
    text-align: center;
    color: #333;
    border-color: #cdd2d9;
    padding: 0 12px 0 0;
}
.grid .sel {
    width: 19px;
    padding: 0;
    background: #dfe3e8;
    text-align: center;
    font-size: 13px;
    font-weight: bold;
    border-color: #c4c9d0;
}
.grid tbody tr:nth-child(even) .sel {
    background: #dfe3e8;
}
.grid .sel.hot, .grid .cur {
    background: linear-gradient(#ffe78f, #ffd055);
}
.grid .corner {
    background: linear-gradient(135deg, #dfe3e8 50%, #eef0f3 50%);
}
.drop {
    position: absolute;
    right: 6px;
    top: 7px;
    border-top: 4px solid #333;
    border-left: 3px solid transparent;
    border-right: 3px solid transparent;
}
.grid .num {
    text-align: right;
    padding: 0 1px 0 0;
}
.grid .kana {
    font-feature-settings: "palt";
    letter-spacing: 0.3px;
}
.grid .date {
    text-align: right;
    padding: 0 2px 0 0;
    letter-spacing: 0.35px;
}
.grid .chk {
    text-align: center;
    padding: 0 0 0 2px;
}
.grid .picked td {
    background: #a8cfee;
}
.grid .picked .sel.hot {
    background: #ffd055;
}
.grid .picked .focus {
    background: #fff;
    box-shadow: inset 0 0 0 1px #f6a9a9;
}
.inv {
    background: #000;
    color: #fff;
    line-height: 14px;
    display: inline-block;
}
.box {
    display: block;
    width: 13px;
    height: 13px;
    margin: 1px auto 0;
    border: 1px solid #333;
    background: #fff;
    position: relative;
}
.box.on::after {
    content: "";
    position: absolute;
    left: 3px;
    top: 0;
    width: 5px;
    height: 9px;
    border-right: 2px solid #333;
    border-bottom: 2px solid #333;
    transform: rotate(40deg);
}

/* record navigator */
.rec-bar {
    height: 19px;
    display: flex;
    align-items: center;
    background: linear-gradient(#f6f6f6 50%, #e9ebee 50%);
    border-top: 1px solid #b5b5b5;
    border-bottom: 2px solid #ababab;
    border-right: 1px solid #ababab;
    white-space: nowrap;
    color: #777;
    padding-left: 4px;
}
.rec-label {
    width: 48px;
    letter-spacing: -1.2px;
}
.rec-ico {
    margin-right: 8px;
    flex: none;
}
.rec-ico.first { margin-right: 10px; }
.rec-ico.prev { margin-right: 6px; }
.rec-ico.nxt { margin-right: 10px; }
.rec-pos {
    width: 50px;
    height: 17px;
    line-height: 16px;
    background: #fff;
    border: 1px solid #aaa;
    color: #222;
    padding-left: 2px;
    margin-right: 9px;
    font-size: 13px;
}
.rec-filter {
    display: flex;
    align-items: center;
    width: 97px;
    height: 17px;
    gap: 3px;
    padding-left: 10px;
    border-left: 1px solid #ccc;
    border-right: 1px solid #ccc;
    color: #999;
    letter-spacing: -1.7px;
}
.rec-search {
    width: 72px;
    height: 17px;
    line-height: 15px;
    margin-left: 9px;
    background: #fff;
    border: 1px solid #aaa;
    color: #222;
    padding-left: 2px;
}

/* status bar */
.status {
    flex: 1;
    display: flex;
    align-items: center;
    background: #f1f1f1;
    color: #555;
    white-space: nowrap;
}
.status-text {
    margin-left: 6px;
    margin-top: -2px;
    letter-spacing: -1.5px;
}
.numlock {
    margin-left: auto;
    margin-right: 19px;
    font-family: "Noto Sans", sans-serif;
    font-size: 13px;
    color: #666;
}
.vbtn {
    width: 38px;
    height: 22px;
    display: flex;
    align-items: center;
    justify-content: center;
}
.vbtn.on {
    background: #c6c6c6;
}
.vbtn.sql {
    font-size: 9px;
    font-family: "Noto Sans", sans-serif;
}

/* view dropdown */
.view-menu {
    position: absolute;
    left: 7px;
    top: 130px;
    width: 186px;
    height: 138px;
    background: #fff;
    border: 1px solid #c6c6c6;
    font-size: 12px;
}
.vm-item {
    height: 42px;
    display: flex;
    align-items: center;
    gap: 5px;
    padding-left: 4px;
    color: #444;
    white-space: nowrap;
}
.vm-item:first-child {
    margin-top: 4px;
    height: 37px;
}
.vm-item:nth-child(2) {
    margin: 5px 0 6px;
    height: 37px;
}
.vm-item.hover {
    background: #fdbcbf;
    height: 40px;
    margin-top: 0;
}
.vm-icon {
    width: 36px;
    height: 36px;
    display: flex;
    align-items: center;
    justify-content: center;
    flex: none;
}
.picked-icon {
    border: 1px solid #f4a6a6;
    background: #fff;
}
.sql-big {
    font-size: 18px;
    font-weight: bold;
    color: #555;
    font-family: "Noto Sans", sans-serif;
}
.vm-sql {
    letter-spacing: 0.4px;
}

/* annotation */
.mark {
    position: absolute;
    border: 6px solid #e00000;
    border-radius: 2px;
}
.mark-view {
    left: 3px;
    top: 56px;
    width: 51px;
    height: 75px;
}
.mark-design {
    left: 4px;
    top: 216px;
    width: 193px;
    height: 52px;
}
.pointer {
    position: absolute;
    left: 167px;
    top: 238px;
}
```
